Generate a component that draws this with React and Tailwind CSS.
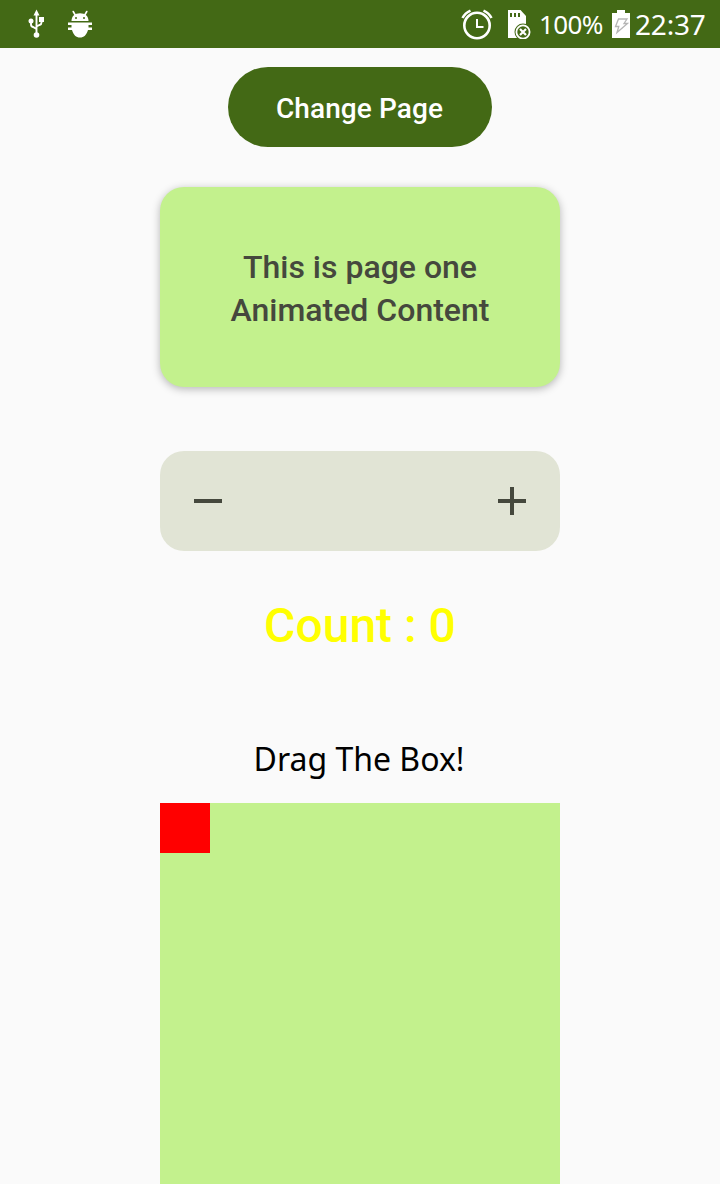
import React, { useState } from "react";

function UsbIcon() {
  return (
    <svg className="ml-7 h-[30px] w-[17px]" viewBox="0 0 17 30" fill="none" stroke="#fff" strokeWidth="1.9">
      <path d="M8.500 5v20M3 12v3.500q0 2 2 2.500l3.500 2M13.500 10v3.500q0 2-2 2.500l-3 1.500" />
      <path d="M8.500 0.500l3 6H5.500z" fill="#fff" stroke="none" />
      <circle cx="3" cy="12" r="2.500" fill="#fff" stroke="none" />
      <path d="M11 8h5v5h-5z" fill="#fff" stroke="none" />
      <circle cx="8.500" cy="26" r="2.800" fill="#fff" stroke="none" />
    </svg>
  );
}

function DebugIcon() {
  return (
    <svg className="ml-[22px] h-[30px] w-[26px]" viewBox="0 0 26 30" fill="#fff">
      <path d="M4.500 12C4.500 7 8 4.300 13 4.300s8.500 2.700 8.500 7.700z" />
      <path d="M6.200 2.500l2.300 4M19.800 2.500l-2.300 4" stroke="#fff" strokeWidth="1.600" strokeLinecap="round" />
      <circle cx="9" cy="9" r="1" fill="#436915" />
      <circle cx="17" cy="9" r="1" fill="#436915" />
      <path d="M1 13.500h24V16h-3.500v2.500H25V21h-4C19.500 26 17 28.500 13 28.500S6.500 26 5 21H1v-2.500h3.500V16H1z" />
    </svg>
  );
}

function AlarmIcon() {
  return (
    <svg className="h-8 w-8" viewBox="0 0 32 32" fill="none" stroke="#fff">
      <circle cx="16" cy="17.500" r="12.700" strokeWidth="2.600" />
      <path d="M16 11v8h6.500" strokeWidth="2" />
      <path d="M1.500 10Q4 5 9.500 2.600M30.500 10Q28 5 22.500 2.600" strokeWidth="2.500" />
    </svg>
  );
}

function SdCardIcon() {
  return (
    <svg className="ml-[14px] h-[30px] w-[25px]" viewBox="0 0 25 30" fill="none">
      <path d="M1 1h12.500L19 7v22H1z" fill="#fff" />
      <path d="M4 4v4M8 4v4M12 4v4" stroke="#436915" strokeWidth="2" />
      <circle cx="16" cy="23" r="8.500" fill="#436915" />
      <circle cx="16" cy="23" r="6.600" stroke="#fff" strokeWidth="1.800" />
      <path d="M13 20l6 6M19 20l-6 6" stroke="#fff" strokeWidth="2.200" />
    </svg>
  );
}

function BatteryIcon() {
  return (
    <svg className="ml-2 h-7 w-[18px]" viewBox="0 0 18 28" fill="none">
      <path d="M5 0h8v3h5v25H0V3h5z" fill="#fff" />
      <path d="M6.500 9H15l-3 4.500h3.500L5 22.500l1.800-6H3.500z" stroke="#b5b5b5" strokeWidth="1.300" />
    </svg>
  );
}

function StatusBar() {
  return (
    <header className="flex h-12 shrink-0 items-center bg-[#436915] font-['Noto_Sans',sans-serif] text-white">
      <UsbIcon />
      <DebugIcon />
      <div className="ml-auto flex items-center">
        <AlarmIcon />
        <SdCardIcon />
        <span className="ml-[7px] w-[65px] text-[26px] leading-[48px] tracking-[-0.6px] whitespace-nowrap">100%</span>
        <BatteryIcon />
        <span className="ml-[5px] w-[85px] text-[28px] leading-[48px] tracking-[-0.2px] whitespace-nowrap">22:37</span>
      </div>
    </header>
  );
}

export default function App() {
  const [count, setCount] = useState(0);
  const [page, setPage] = useState("one");
  return (
    <div className="flex h-[1184px] w-[720px] flex-col overflow-hidden bg-[#fafafa] font-[Roboto,sans-serif]">
      <StatusBar />
      <main className="flex flex-col items-center">
        <button
          onClick={() => setPage(page === "one" ? "two" : "one")}
          className="mt-[19px] h-20 w-[264px] shrink-0 rounded-full bg-[#436915] pt-[3px] pr-px text-[28px] font-medium tracking-[0.1px] text-white"
        >
          Change Page
        </button>
        <section className="mt-10 flex h-[200px] w-[400px] shrink-0 items-center justify-center rounded-3xl bg-[#c3f18d] pt-1 text-center text-[32px] leading-[43px] font-medium text-[#45483d] shadow-[0_2px_8px_rgba(0,0,0,0.28)]">
          <p>
            This is page {page}
            <br />
            Animated Content
          </p>
        </section>
        <div className="mt-16 flex h-[100px] w-[400px] shrink-0 items-center justify-between rounded-3xl bg-[#e1e4d5] px-6">
          <button aria-label="Decrease" onClick={() => setCount(count - 1)}>
            <svg className="h-12 w-12" viewBox="0 0 24 24" fill="#45483d">
              <path d="M5 11h14v2H5z" />
            </svg>
          </button>
          <button aria-label="Increase" onClick={() => setCount(count + 1)}>
            <svg className="h-12 w-12" viewBox="0 0 24 24" fill="#45483d">
              <path d="M5 11h6V5h2v6h6v2h-6v6h-2v-6H5z" />
            </svg>
          </button>
        </div>
        <p className="mt-[43px] text-[48px] leading-[64px] font-medium text-[#ffff00]">Count : {count}</p>
        <p className="mt-[77px] pr-[2px] font-['Noto_Sans',sans-serif] text-[32px] leading-[48px] text-black">Drag The Box!</p>
        <div className="mt-5 h-[400px] w-[400px] shrink-0 bg-[#c3f18d]">
          <div className="h-[50px] w-[50px] bg-[#ff0000]" />
        </div>
      </main>
    </div>
  );
}
